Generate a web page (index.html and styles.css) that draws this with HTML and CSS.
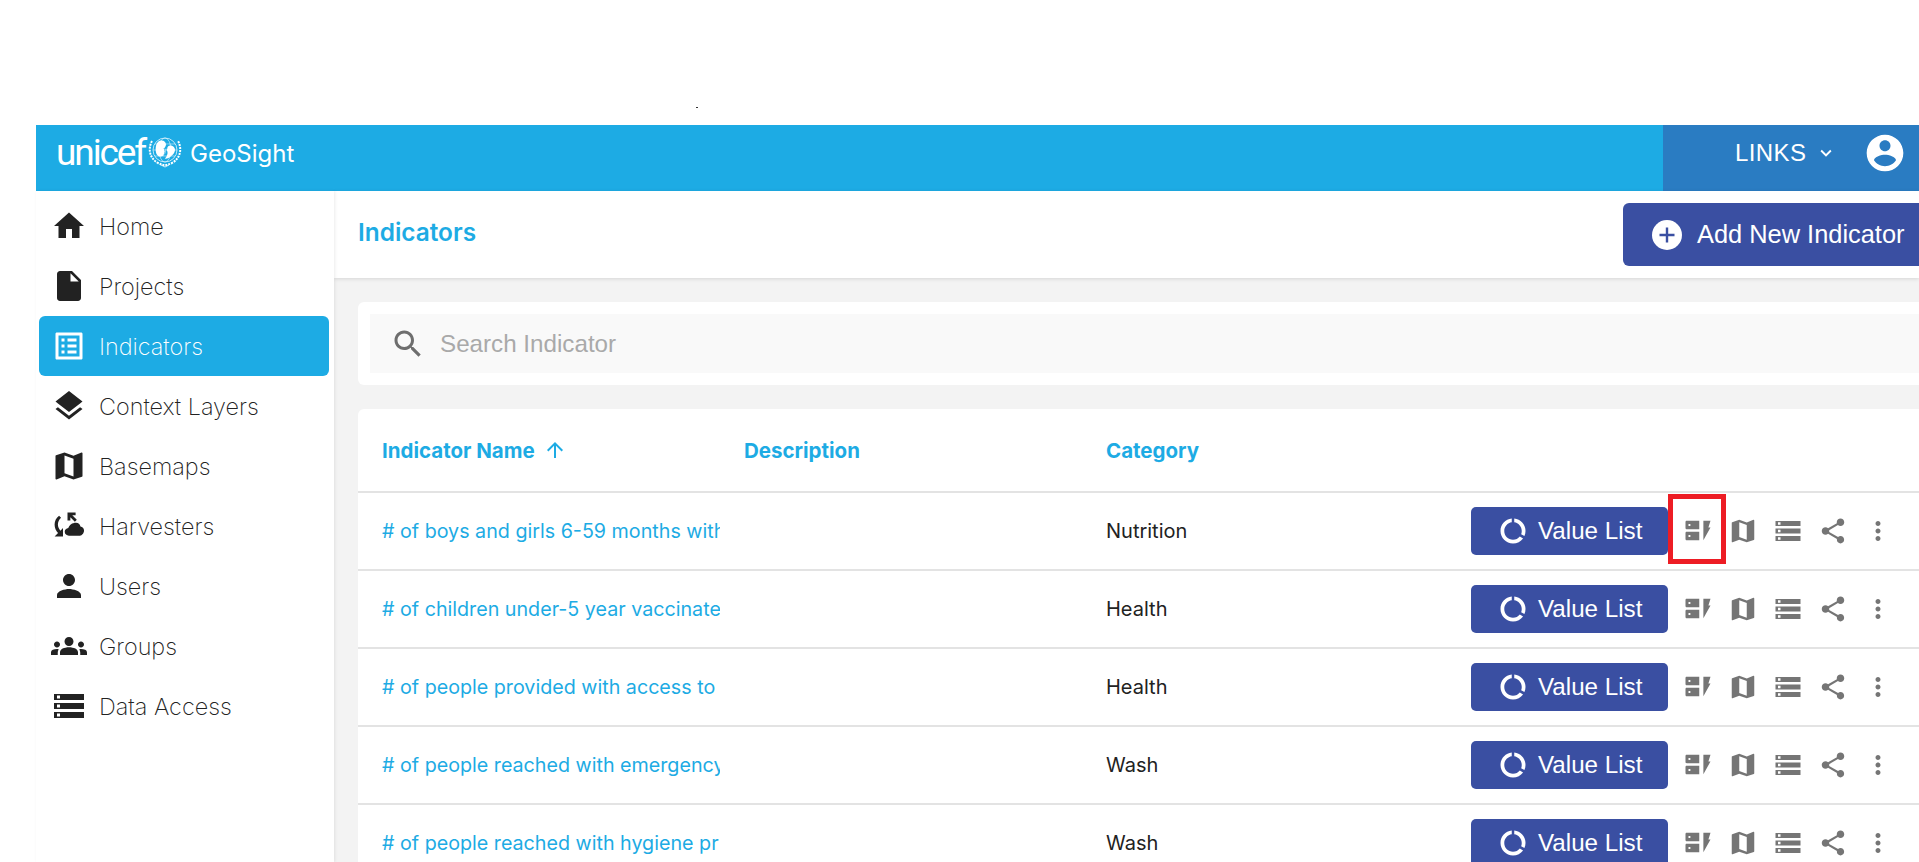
FILE: index.html
```html
<!DOCTYPE html>
<html lang="en">
  <head>
    <meta charset="UTF-8" />
    <title>GeoSight Indicators</title>
    <link rel="stylesheet" href="styles.css">
  </head>
  <body>
    <svg class="iconDefs" xmlns="http://www.w3.org/2000/svg">
      <symbol id="i-home" viewBox="0 0 24 24"><path d="M10 20v-6h4v6h5v-8h3L12 3 2 12h3v8z"/></symbol>
      <symbol id="i-file" viewBox="0 0 24 24"><path d="M6 2c-1.1 0-1.99.9-1.99 2L4 20c0 1.1.89 2 1.99 2H18c1.1 0 2-.9 2-2V8l-6-6H6zm7 7V3.5L18.5 9H13z"/></symbol>
      <symbol id="i-list" viewBox="0 0 24 24"><path d="M19 5v14H5V5h14m1.1-2H3.9c-.5 0-.9.4-.9.9v16.2c0 .4.4.9.9.9h16.2c.4 0 .9-.5.9-.9V3.900c0-.5-.5-.9-.9-.9zM11 7h6v2h-6V7zm0 4h6v2h-6v-2zm0 4h6v2h-6zM7 7h2v2H7zm0 4h2v2H7zm0 4h2v2H7z"/></symbol>
      <symbol id="i-layers" viewBox="0 0 24 24"><path d="M11.99 18.54l-7.37-5.73L3 14.07l9 7 9-7-1.63-1.27-7.38 5.74zM12 16l7.36-5.73L21 9l-9-7-9 7 1.63 1.27L12 16z"/></symbol>
      <symbol id="i-map" viewBox="0 0 24 24"><path d="M20.5 3l-.16.03L15 5.1 9 3 3.36 4.9c-.21.07-.36.25-.36.48V20.5c0 .28.22.5.5.5l.16-.03L9 18.9l6 2.1 5.64-1.9c.21-.07.36-.25.36-.48V3.5c0-.28-.22-.5-.5-.5zM15 19l-6-2.11V5l6 2.11V19z"/></symbol>
      <symbol id="i-harvest" viewBox="0 0 24 24"><path d="M5.4 5.2l1.3 1.300C5.300 7.800 4.600 9.300 4.600 11c0 1.600.7 3 1.700 4.100L8 13.400V19H2.400l2.300-2.300C3.300 15.200 2.400 13.200 2.400 11c0-2.300 1.100-4.400 3-5.800zM11 3h5.400v1.900h-2.200l3 3-1.300 1.300-3-3v2.200H11z"/><path d="M16.400 9.600c1.600 0 3 1.200 3.200 2.800 1.400.2 2.600 1.400 2.600 2.900 0 1.700-1.400 3.700-3 3.700h-8c-1.500 0-3-1-3-2.800 0-1.600 1.200-2.600 2.600-2.800.7-2.200 2.800-3.800 5.600-3.800z" transform="translate(1.600 1) scale(.92)"/></symbol>
      <symbol id="i-person" viewBox="0 0 24 24"><path d="M12 12c2.21 0 4-1.790 4-4s-1.790-4-4-4-4 1.790-4 4 1.790 4 4 4zm0 2c-2.670 0-8 1.340-8 4v2h16v-2c0-2.660-5.330-4-8-4z"/></symbol>
      <symbol id="i-groups" viewBox="0 0 24 24"><path d="M12 12.75c1.63 0 3.07.39 4.24.9 1.08.48 1.76 1.56 1.76 2.73V18H6v-1.61c0-1.18.68-2.26 1.76-2.73 1.17-.52 2.61-.91 4.24-.91zM4 13c1.1 0 2-.9 2-2s-.9-2-2-2-2 .9-2 2 .9 2 2 2zm1.13 1.1c-.37-.06-.74-.1-1.13-.1-.99 0-1.93.21-2.78.58C.48 14.9 0 15.62 0 16.43V18h4.5v-1.61c0-.83.23-1.61.63-2.29zM20 13c1.1 0 2-.9 2-2s-.9-2-2-2-2 .9-2 2 .9 2 2 2zm4 3.43c0-.81-.48-1.53-1.22-1.85-.85-.37-1.79-.58-2.78-.58-.39 0-.76.04-1.13.1.4.68.63 1.46.63 2.29V18H24v-1.57zM12 6c1.66 0 3 1.34 3 3s-1.34 3-3 3-3-1.34-3-3 1.34-3 3-3z"/></symbol>
      <symbol id="i-storage" viewBox="0 0 24 24"><path d="M2 20h20v-4H2v4zm2-3h2v2H4v-2zM2 4v4h20V4H2zm4 3H4V5h2v2zm-4 7h20v-4H2v4zm2-3h2v2H4v-2z"/></symbol>
      <symbol id="i-search" viewBox="0 0 24 24"><path d="M15.5 14h-.79l-.28-.27C15.41 12.59 16 11.11 16 9.5 16 5.91 13.09 3 9.5 3S3 5.91 3 9.5 5.91 16 9.5 16c1.61 0 3.09-.59 4.23-1.57l.27.28v.79l5 4.99L20.49 19l-4.99-5zm-6 0C7.01 14 5 11.99 5 9.5S7.01 5 9.5 5 14 7.01 14 9.5 11.99 14 9.5 14z"/></symbol>
      <symbol id="i-share" viewBox="0 0 24 24"><path d="M18 16.08c-.76 0-1.44.3-1.96.77L8.91 12.7c.05-.23.09-.46.09-.7s-.04-.47-.09-.7l7.05-4.11c.54.5 1.25.81 2.04.81 1.66 0 3-1.34 3-3s-1.34-3-3-3-3 1.34-3 3c0 .24.04.47.09.7L8.04 9.81C7.5 9.31 6.79 9 6 9c-1.66 0-3 1.34-3 3s1.34 3 3 3c.79 0 1.5-.31 2.04-.81l7.12 4.16c-.05.21-.08.43-.08.65 0 1.61 1.31 2.92 2.92 2.92 1.61 0 2.92-1.31 2.92-2.92s-1.31-2.92-2.92-2.92z"/></symbol>
      <symbol id="i-more" viewBox="0 0 24 24"><path d="M12 8c1.1 0 2-.9 2-2s-.9-2-2-2-2 .9-2 2 .9 2 2 2zm0 2c-1.1 0-2 .9-2 2s.9 2 2 2 2-.9 2-2-.9-2-2-2zm0 6c-1.1 0-2 .9-2 2s.9 2 2 2 2-.9 2-2-.9-2-2-2z"/></symbol>
      <symbol id="i-account" viewBox="0 0 24 24"><path d="M12 2C6.48 2 2 6.48 2 12s4.48 10 10 10 10-4.48 10-10S17.52 2 12 2zm0 3c1.66 0 3 1.34 3 3s-1.34 3-3 3-3-1.34-3-3 1.34-3 3-3zm0 14.2c-2.5 0-4.71-1.28-6-3.22.03-1.99 4-3.08 6-3.08 1.99 0 5.97 1.09 6 3.08-1.29 1.94-3.5 3.22-6 3.22z"/></symbol>
      <symbol id="i-usage" viewBox="0 0 24 24"><path d="M13 2.05v3.03c3.39.49 6 3.39 6 6.92 0 .9-.18 1.75-.48 2.54l2.6 1.53c.56-1.24.88-2.62.88-4.07 0-5.18-3.95-9.45-9-9.95zM12 19c-3.87 0-7-3.13-7-7 0-3.53 2.61-6.43 6-6.92V2.05c-5.06.5-9 4.76-9 9.95 0 5.52 4.47 10 9.99 10 3.31 0 6.24-1.61 8.06-4.09l-2.6-1.53C16.17 17.98 14.21 19 12 19z"/></symbol>
      <symbol id="i-form" viewBox="0 0 24 24"><path fill-rule="evenodd" d="M3 3.800h10v6.700H3c-.55 0-1-.45-1-1V4.800c0-.55.45-1 1-1zm1.400 2.600v1.500h1.500V6.400H4.400zM3 12.600h10v6.700H3c-.55 0-1-.45-1-1v-4.700c0-.55.45-1 1-1zm1.400 2.600v1.500h1.500v-1.500H4.400zM16.300 3.800H22l-1.700 5.400H22l-5.700 10.100z"/></symbol>
    </svg>

    <span class="strayDot"></span>

    <div class="appFrame">
      <header class="topBar">
        <div class="brand">
          <span class="unicefWord">unicef</span>
          <svg class="emblem" viewBox="0 0 34 32" fill="none" stroke="#fff">
            <circle cx="17" cy="14" r="12" stroke-width=".7"/>
            <ellipse cx="17" cy="14" rx="6" ry="12" stroke-width=".5"/>
            <path d="M5 14h24M7 8h20M7 20h20" stroke-width=".5"/>
            <path d="M4 5C0 12 1 22 10 27c3 1.500 5 2 7 2s4-.5 7-2c9-5 10-15 6-22" stroke-width="2" stroke-dasharray="2 1"/>
            <path d="M13 29l4 2 4-2" stroke-width=".8"/>
            <path fill="#fff" stroke="none" d="M11 5c4-1.500 7 .5 7 3.500 0 1.500-1 2.500-1.500 3.500 1.500 1 2 3 1 5-1 2.500-3.500 4-6 3.500-2-.5-3-2-3.500-4C7 12 8 7 11 5z"/>
            <path fill="#fff" stroke="none" d="M22 9.500c3 0 5 2 5 4.500 0 3-2.500 5-5 7-2 1.500-4 2-5 1.500 1.500-1.500 2-3 2.500-5 .5-2.500-1.500-3-.5-5.500.5-1.500 1.700-2.500 3-2.500z"/>
            <path stroke="#1dabe4" stroke-width="1" d="M16 12c1.500 2 1.500 5 0 7M20 8.500c-1 1-1.500 2.500-1 4"/>
          </svg>
          <span class="appName">GeoSight</span>
        </div>
        <div class="topLinks">
          <span class="linksLabel">LINKS</span>
          <svg class="chevron" viewBox="0 0 24 24"><path d="M7.41 8.59 12 13.17l4.59-4.58L18 10l-6 6-6-6z"/></svg>
          <svg class="accountIcon"><use href="#i-account"/></svg>
        </div>
      </header>

      <div class="appBody">
        <nav class="sideNav">
          <a class="navItem"><svg class="navIcon"><use href="#i-home"/></svg>Home</a>
          <a class="navItem"><svg class="navIcon"><use href="#i-file"/></svg>Projects</a>
          <a class="navItem navItemActive"><svg class="navIcon"><use href="#i-list"/></svg>Indicators</a>
          <a class="navItem"><svg class="navIcon"><use href="#i-layers"/></svg>Context Layers</a>
          <a class="navItem"><svg class="navIcon"><use href="#i-map"/></svg>Basemaps</a>
          <a class="navItem"><svg class="navIcon"><use href="#i-harvest"/></svg>Harvesters</a>
          <a class="navItem"><svg class="navIcon"><use href="#i-person"/></svg>Users</a>
          <a class="navItem"><svg class="navIcon"><use href="#i-groups"/></svg>Groups</a>
          <a class="navItem"><svg class="navIcon"><use href="#i-storage"/></svg>Data Access</a>
        </nav>

        <main class="mainArea">
          <div class="pageHead">
            <h1 class="pageTitle">Indicators</h1>
            <button class="addButton">
              <svg class="plusIcon" viewBox="0 0 30 30">
                <circle cx="15" cy="15" r="15" fill="#fff"/>
                <path d="M15 7.500v15M7.500 15h15" stroke="#3a4fa2" stroke-width="2.400"/>
              </svg>
              Add New Indicator
            </button>
          </div>

          <div class="pageContent">
            <section class="card searchCard">
              <div class="searchBox">
                <svg class="searchIcon"><use href="#i-search"/></svg>
                <span class="searchHint">Search Indicator</span>
              </div>
            </section>

            <section class="card tableCard">
              <div class="tableRow tableHead">
                <div class="cellName headName">Indicator Name
                  <svg class="sortIcon" viewBox="0 0 24 24"><path d="M4 12l1.410 1.410L11 7.830V20h2V7.830l5.580 5.590L20 12l-8-8-8 8z"/></svg>
                </div>
                <div class="cellDesc">Description</div>
                <div class="cellCat">Category</div>
              </div>

              <div class="tableRow">
                <div class="cellName"><a class="nameLink"># of boys and girls 6-59 months with</a></div>
                <div class="cellDesc"></div>
                <div class="cellCat">Nutrition</div>
                <div class="rowActions">
                  <button class="valueButton"><svg class="usageIcon"><use href="#i-usage"/></svg>Value List</button>
                  <div class="iconButton"><svg><use href="#i-form"/></svg><span class="redBox"></span></div>
                  <div class="iconButton"><svg><use href="#i-map"/></svg></div>
                  <div class="iconButton"><svg><use href="#i-storage"/></svg></div>
                  <div class="iconButton"><svg><use href="#i-share"/></svg></div>
                  <div class="iconButton"><svg><use href="#i-more"/></svg></div>
                </div>
              </div>

              <div class="tableRow">
                <div class="cellName"><a class="nameLink"># of children under-5 year vaccinate</a></div>
                <div class="cellDesc"></div>
                <div class="cellCat">Health</div>
                <div class="rowActions">
                  <button class="valueButton"><svg class="usageIcon"><use href="#i-usage"/></svg>Value List</button>
                  <div class="iconButton"><svg><use href="#i-form"/></svg></div>
                  <div class="iconButton"><svg><use href="#i-map"/></svg></div>
                  <div class="iconButton"><svg><use href="#i-storage"/></svg></div>
                  <div class="iconButton"><svg><use href="#i-share"/></svg></div>
                  <div class="iconButton"><svg><use href="#i-more"/></svg></div>
                </div>
              </div>

              <div class="tableRow">
                <div class="cellName"><a class="nameLink"># of people provided with access to</a></div>
                <div class="cellDesc"></div>
                <div class="cellCat">Health</div>
                <div class="rowActions">
                  <button class="valueButton"><svg class="usageIcon"><use href="#i-usage"/></svg>Value List</button>
                  <div class="iconButton"><svg><use href="#i-form"/></svg></div>
                  <div class="iconButton"><svg><use href="#i-map"/></svg></div>
                  <div class="iconButton"><svg><use href="#i-storage"/></svg></div>
                  <div class="iconButton"><svg><use href="#i-share"/></svg></div>
                  <div class="iconButton"><svg><use href="#i-more"/></svg></div>
                </div>
              </div>

              <div class="tableRow">
                <div class="cellName"><a class="nameLink"># of people reached with emergency</a></div>
                <div class="cellDesc"></div>
                <div class="cellCat">Wash</div>
                <div class="rowActions">
                  <button class="valueButton"><svg class="usageIcon"><use href="#i-usage"/></svg>Value List</button>
                  <div class="iconButton"><svg><use href="#i-form"/></svg></div>
                  <div class="iconButton"><svg><use href="#i-map"/></svg></div>
                  <div class="iconButton"><svg><use href="#i-storage"/></svg></div>
                  <div class="iconButton"><svg><use href="#i-share"/></svg></div>
                  <div class="iconButton"><svg><use href="#i-more"/></svg></div>
                </div>
              </div>

              <div class="tableRow">
                <div class="cellName"><a class="nameLink"># of people reached with hygiene pr</a></div>
                <div class="cellDesc"></div>
                <div class="cellCat">Wash</div>
                <div class="rowActions">
                  <button class="valueButton"><svg class="usageIcon"><use href="#i-usage"/></svg>Value List</button>
                  <div class="iconButton"><svg><use href="#i-form"/></svg></div>
                  <div class="iconButton"><svg><use href="#i-map"/></svg></div>
                  <div class="iconButton"><svg><use href="#i-storage"/></svg></div>
                  <div class="iconButton"><svg><use href="#i-share"/></svg></div>
                  <div class="iconButton"><svg><use href="#i-more"/></svg></div>
                </div>
              </div>
            </section>
          </div>
        </main>
      </div>
    </div>
  </body>
</html>
```

FILE: styles.css
```css
html,
body {
  margin: 0;
  padding: 0;
  height: 100%;
  overflow: hidden;
  background-color: #fff;
  font-family: 'Inter', 'Liberation Sans', sans-serif;
}

.iconDefs {
  display: none;
}

.strayDot {
  position: absolute;
  left: 696px;
  top: 107px;
  width: 2px;
  height: 1px;
  background-color: #333;
}

.appFrame {
  box-sizing: border-box;
  height: 100vh;
  padding: 125px 0 0 36px;
  display: flex;
  flex-direction: column;
}

/* top bar */
.topBar {
  flex: 0 0 66px;
  display: flex;
  justify-content: space-between;
  background-color: #1dabe4;
  color: #fff;
}

.brand {
  display: flex;
  align-items: flex-start;
  padding: 6px 0 0 20px;
}

.unicefWord {
  font-family: 'Roboto', sans-serif;
  font-weight: 400;
  font-size: 37px;
  line-height: 44px;
  letter-spacing: -2.1px;
}

.emblem {
  width: 34px;
  height: 32px;
  margin: 5px 0 0 3px;
}

.appName {
  font-size: 24px;
  line-height: 26px;
  margin: 10px 0 0 8px;
}

.topLinks {
  width: 256px;
  display: flex;
  align-items: center;
  background-color: #2a7cc2;
  box-sizing: border-box;
  padding: 0 0 10px 72px;
}

.linksLabel {
  font-family: 'Liberation Sans', sans-serif;
  font-size: 24px;
  letter-spacing: .4px;
}

.chevron {
  width: 22px;
  height: 22px;
  margin-left: 9px;
  fill: #fff;
}

.accountIcon {
  width: 44px;
  height: 44px;
  margin-left: 26px;
  fill: #fff;
}

/* sidebar */
.appBody {
  flex: 1;
  display: flex;
  min-height: 0;
}

.sideNav {
  flex: 0 0 298px;
  box-sizing: border-box;
  padding: 5px 5px 0 3px;
  box-shadow: 1px 0 3px rgba(0, 0, 0, 0.08);
  background-color: #fff;
  z-index: 1;
}

.navItem {
  display: flex;
  align-items: center;
  height: 60px;
  padding-left: 12px;
  border-radius: 6px;
  font-weight: 200;
  font-size: 23.4px;
  color: #222;
}

.navIcon {
  flex: 0 0 36px;
  height: 36px;
  margin-right: 12px;
  fill: #222;
}

.navItemActive {
  background-color: #1dabe4;
  color: #fff;
}

.navItemActive .navIcon {
  fill: #fff;
}

/* main */
.mainArea {
  flex: 1;
  min-width: 0;
  display: flex;
  flex-direction: column;
  background-color: #f3f3f3;
}

.pageHead {
  flex: 0 0 87px;
  display: flex;
  justify-content: space-between;
  background-color: #fff;
  box-shadow: 0 1px 4px rgba(0, 0, 0, 0.12);
  padding-left: 24px;
  position: relative;
}

.pageTitle {
  margin: 27px 0 0;
  font-size: 24.4px;
  line-height: 28px;
  font-weight: 600;
  color: #1dabe4;
}

.addButton {
  display: flex;
  align-items: center;
  box-sizing: border-box;
  width: 296px;
  height: 63px;
  margin-top: 12px;
  padding: 0 0 0 29px;
  border: none;
  border-radius: 6px 0 0 6px;
  background-color: #3a4fa2;
  color: #fff;
  font-family: 'Liberation Sans', sans-serif;
  font-size: 25.4px;
}

.plusIcon {
  width: 30px;
  height: 30px;
  margin-right: 15px;
}

.pageContent {
  flex: 1;
  min-height: 0;
  padding: 24px 0 0 24px;
}

.card {
  background-color: #fff;
  border-radius: 6px 0 0 6px;
}

.searchCard {
  padding: 12px 0 12px 12px;
  margin-bottom: 24px;
}

.searchBox {
  display: flex;
  align-items: center;
  height: 59px;
  background-color: #f9f9f9;
  padding-left: 20px;
}

.searchIcon {
  width: 36px;
  height: 36px;
  margin-right: 14px;
  fill: #6e6e6e;
}

.searchHint {
  font-family: 'Liberation Sans', sans-serif;
  font-size: 24.2px;
  color: #a9a9a9;
}

/* table */
.tableRow {
  display: flex;
  align-items: center;
  box-sizing: border-box;
  height: 78px;
  border-bottom: 2px solid #e3e3e3;
  font-size: 20px;
  color: #222;
}

.tableHead {
  height: 84px;
  font-size: 20.5px;
  font-weight: 700;
  color: #1dabe4;
}

.cellName {
  flex: 0 0 338px;
  margin-left: 24px;
  margin-right: 24px;
  overflow: hidden;
  white-space: nowrap;
}

.headName {
  display: flex;
  align-items: center;
}

.sortIcon {
  width: 24px;
  height: 24px;
  margin-left: 8px;
  fill: #1dabe4;
}

.nameLink {
  font-size: 19.7px;
  color: #1dabe4;
}

.cellDesc {
  flex: 0 0 338px;
  margin-right: 24px;
}

.cellCat {
  flex: 0 0 200px;
}

.rowActions {
  display: flex;
  align-items: center;
  margin-left: 165px;
}

.valueButton {
  display: flex;
  align-items: center;
  box-sizing: border-box;
  width: 197px;
  height: 48px;
  padding: 0 0 0 27px;
  border: none;
  border-radius: 5px;
  background-color: #3a4fa2;
  color: #fff;
  font-family: 'Liberation Sans', sans-serif;
  font-size: 24.2px;
}

.usageIcon {
  width: 30px;
  height: 30px;
  margin-right: 10px;
  fill: #fff;
}

.iconButton {
  position: relative;
  display: flex;
  width: 30px;
  height: 30px;
  margin-left: 15px;
  fill: #757575;
}

.iconButton svg {
  width: 30px;
  height: 30px;
}

.redBox {
  position: absolute;
  left: -15px;
  top: -22px;
  box-sizing: border-box;
  width: 58px;
  height: 70px;
  border: 5px solid #ed1c24;
}
```
